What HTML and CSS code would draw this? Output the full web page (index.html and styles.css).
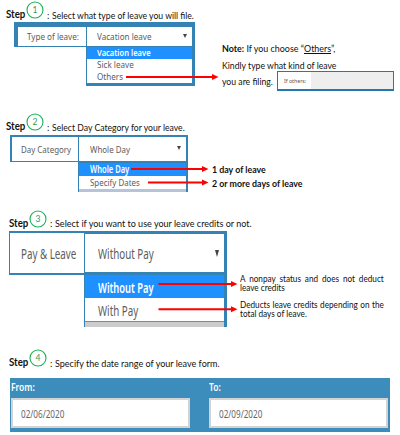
FILE: index.html
```html
<!DOCTYPE html>
<html lang="en">
<head>
<meta charset="utf-8">
<title>Filing a leave</title>
<link rel="stylesheet" href="styles.css">
</head>
<body>
<section class="step step-1">
  <h2 class="heading"><b class="word">Step</b><svg class="num" viewBox="0 0 18 18"><circle cx="9" cy="9" r="8"/><text x="9" y="11.5">1</text></svg><span class="colon">:</span><span class="title">Select what type of leave you will file.</span></h2>
  <div class="row">
    <div class="picker">
      <div class="label"><span>Type of leave:</span></div>
      <div class="select"><span>Vacation leave</span><i class="caret"></i></div>
      <div class="options">
        <div class="option active"><span>Vacation leave</span></div>
        <div class="option"><span>Sick leave</span></div>
        <div class="option"><span>Others</span></div>
      </div>
    </div>
    <div class="note">
      <p><b>Note:</b> If you choose “<u>Others</u>”,</p>
      <p>Kindly type what kind of leave</p>
      <div class="note-row"><p>you are filing.</p><div class="others"><div class="others-label"><span>If others:</span></div></div></div>
    </div>
  </div>
  <svg class="arrows" viewBox="0 0 400 112"><path class="line" d="M126 77H214"/><path class="head" d="M212 74l6.500 3l-6.500 3z"/></svg>
</section>

<section class="step step-2">
  <h2 class="heading"><b class="word">Step</b><svg class="num" viewBox="0 0 18 18"><circle cx="9" cy="9" r="8"/><text x="9" y="11.500">2</text></svg><span class="colon">:</span><span class="title">Select Day Category for your leave.</span></h2>
  <div class="row">
    <div class="picker">
      <div class="label"><span>Day Category</span></div>
      <div class="select"><span>Whole Day</span><i class="caret"></i></div>
      <div class="options">
        <div class="option active"><span>Whole Day</span></div>
        <div class="option"><span>Specify Dates</span></div>
      </div>
    </div>
    <div class="days">
      <p>1 day of leave</p>
      <p>2 or more days of leave</p>
    </div>
  </div>
  <svg class="arrows" viewBox="0 112 400 97"><path class="line" d="M131 169H204M148 182.500H204"/><path class="head" d="M202 166l6.500 3l-6.500 3zM202 179.500l6.500 3l-6.500 3z"/></svg>
</section>

<section class="step step-3">
  <h2 class="heading"><b class="word">Step</b><svg class="num" viewBox="0 0 18 18"><circle cx="9" cy="9" r="8"/><text x="9" y="11.500">3</text></svg><span class="colon">:</span><span class="title">Select if you want to use your leave credits or not.</span></h2>
  <div class="row">
    <div class="picker">
      <div class="label"><span>Pay &amp; Leave</span></div>
      <div class="select"><span>Without Pay</span><i class="caret"></i></div>
      <div class="options">
        <div class="option active"><span>Without Pay</span></div>
        <div class="option"><span>With Pay</span></div>
      </div>
    </div>
    <div class="pay">
      <p>A nonpay status and does not deduct leave credits</p>
      <p>Deducts leave credits depending on the total days of leave.</p>
    </div>
  </div>
  <svg class="arrows" viewBox="0 209 400 139"><path class="line" d="M158.500 284H233M158.500 309.300H233"/><path class="head" d="M231 281l6.500 3l-6.500 3zM231 306.300l6.500 3l-6.500 3z"/></svg>
</section>

<section class="step step-4">
  <h2 class="heading"><b class="word">Step</b><svg class="num" viewBox="0 0 18 18"><circle cx="9" cy="9" r="8"/><text x="9" y="11.500">4</text></svg><span class="colon">:</span><span class="title">Specify the date range of your leave form.</span></h2>
  <div class="range">
    <div class="field"><b>From:</b><div class="input"><span>02/06/2020</span></div></div>
    <div class="field"><b>To:</b><div class="input"><span>02/09/2020</span></div></div>
  </div>
</section>
</body>
</html>
```
FILE: styles.css
```css
* { box-sizing: border-box; }
body { margin: 0; width: 400px; height: 435px; overflow: hidden; background: #fff; color: #111; font-family: Lato, "Liberation Sans", sans-serif; }
p, h2 { margin: 0; }
h2 { font-weight: normal; }
span, p, b { white-space: nowrap; }
.step { position: relative; }
.step-1 { height: 112px; padding-top: 1px; }
.step-2 { height: 97px; padding-top: 1px; }
.step-3 { height: 139px; padding-top: 1px; }
.step-4 { height: 87px; padding-top: 1px; }

/* headings */
.heading { display: flex; height: 21px; padding-left: 6px; font-size: 9.5px; line-height: 12px; }
.step-3 .heading, .step-4 .heading { padding-left: 9px; }
.word { width: 20px; padding-top: 7px; font-size: 10.500px; font-weight: bold; transform: scaleX(.92); transform-origin: 0 0; }
.num { width: 18px; height: 18px; flex: none; }
.num circle { fill: none; stroke: #19b057; stroke-width: 1.1; }
.num text { fill: #2c9c5b; font-size: 8.500px; text-anchor: middle; }
.colon { width: 5px; margin-left: 3px; padding-top: 9px; }
.title { padding-top: 9px; transform: scaleX(.91); transform-origin: 0 0; }
.step-3 .title { transform: scaleX(.95); }
.step-4 .title { transform: scaleX(.95); }
.step-3 .colon, .step-3 .title { padding-top: 8px; }
.step-3 .word { padding-top: 7px; }

/* pickers */
.row { display: flex; align-items: flex-start; }
.picker { display: grid; flex: none; font-family: "Noto Sans", sans-serif; color: #5c5c5c; }
.label, .select, .option { display: flex; align-items: center; background: #fff; }
.label span, .select span, .option span, .others-label span { transform-origin: 0 50%; transform: scaleX(var(--squeeze)); }
.select { position: relative; }
.caret { position: absolute; right: 5px; top: 50%; margin-top: -3px; border: solid transparent; border-width: 4.500px 2px 0; border-top-color: #444; }
.options { grid-column: 2; }
.option.active { background: #1e90ff; color: #fff; }
.option.active span { font-weight: 600; transform: scaleX(var(--squeeze-bold)); }
.arrows { position: absolute; left: 0; top: 0; width: 400px; height: 100%; pointer-events: none; }
.line { stroke: #f00; stroke-width: 2; fill: none; }
.head { fill: #f00; }

.step-1 .picker { --squeeze: .87; --squeeze-bold: .815; width: 181px; margin-left: 14px; grid-template-columns: 72px 109px; font-size: 9.3px; line-height: 12px; }
.step-1 .label { height: 25px; border: solid #3583b5; border-width: 5px 0 1px 4px; padding-left: 9px; }
.step-1 .select { height: 25px; border: solid #3583b5; border-width: 5px 3px 1px 1px; padding-left: 10px; }
.step-1 .options { border: solid #3583b5; border-width: 0 3px 3px 1px; }
.step-1 .option { height: 12px; padding-left: 10px; }

.step-2 .picker { --squeeze: .81; --squeeze-bold: .77; width: 178px; margin-left: 10px; grid-template-columns: 68px 110px; font-size: 9.800px; line-height: 13px; }
.step-2 .row { margin-top: 1px; }
.step-2 .label { height: 27px; border: solid #3583b5; border-width: 2px 0 1px 2px; padding-left: 9px; }
.step-2 .select { height: 28px; border: solid #3583b5; border-width: 2px 2px 2px 1px; padding-left: 11px; }
.step-2 .options { border: solid #3583b5; border-width: 0 2px 0 1px; }
.step-2 .option { height: 13px; padding-left: 11px; }
.step-2 .options::after { content: ""; display: block; height: 3px; background: #b5c4d8; }

.step-3 .picker { --squeeze: .675; --squeeze-bold: .645; width: 218px; margin-left: 9px; grid-template-columns: 75px 143px; font-size: 14.500px; line-height: 20px; }
.step-3 .label { height: 44px; border: solid #3583b5; border-width: 2px 0 2px 1px; padding-left: 10.500px; }
.step-3 .select { height: 44px; border: solid #3583b5; border-width: 3px 3px 3px 1px; padding-left: 13px; }
.step-3 .options { border: solid #3583b5; border-width: 0 3px 0 1px; }
.step-3 .option { height: 23px; padding-left: 13px; }
.step-3 .options::after { content: ""; display: block; height: 5px; background: #ccc; border-top: 1px solid #5b8fce; }
.step-3 .caret { right: 5px; border-width: 7px 2.500px 0; }

/* side notes */
.note { margin: 18px 0 0 27px; font-size: 9.800px; line-height: 17px; }
.note p { transform: scaleX(.885); transform-origin: 0 0; }
.note > p:first-child { transform: scaleX(.91); }
.note-row { display: flex; margin-top: -1px; }
.note-row p { width: 55px; }
.others { width: 117px; height: 20px; margin-top: -2px; border: 1px solid #2378b0; border-bottom-width: 2px; background: #eee; flex: none; }
.others-label { --squeeze: .87; display: flex; align-items: center; width: 33px; height: 100%; padding-left: 6px; background: #fff; color: #555; font: 6px "Noto Sans", sans-serif; }
.days { margin: 28px 0 0 24px; font-size: 9px; line-height: 13.500px; font-weight: bold; }
.days p { transform: scaleX(.98); transform-origin: 0 0; }
.pay { width: 158px; margin: 43px 0 0 13px; transform: scaleX(.91); transform-origin: 0 0; font-size: 9px; line-height: 9px; flex: none; }
.pay p { white-space: normal; text-align: justify; }
.pay p + p { margin-top: 8px; }

/* date range */
.range { display: flex; gap: 19px; width: 380px; height: 54px; margin: 8px 0 0 10px; padding: 2px 2px 0 1px; background: #3c8dbc; font-family: "Noto Sans", sans-serif; font-size: 11px; }
.field { flex: 1; }
.field b { display: block; height: 18px; line-height: 13px; color: #fff; font-weight: 600; transform: scaleX(.77); transform-origin: 0 0; }
.input { display: flex; align-items: center; height: 30px; padding-left: 8px; border: 2px solid #d3d3d3; background: #fff; color: #666; }
.input span { transform: scaleX(.74); transform-origin: 0 50%; }
```
